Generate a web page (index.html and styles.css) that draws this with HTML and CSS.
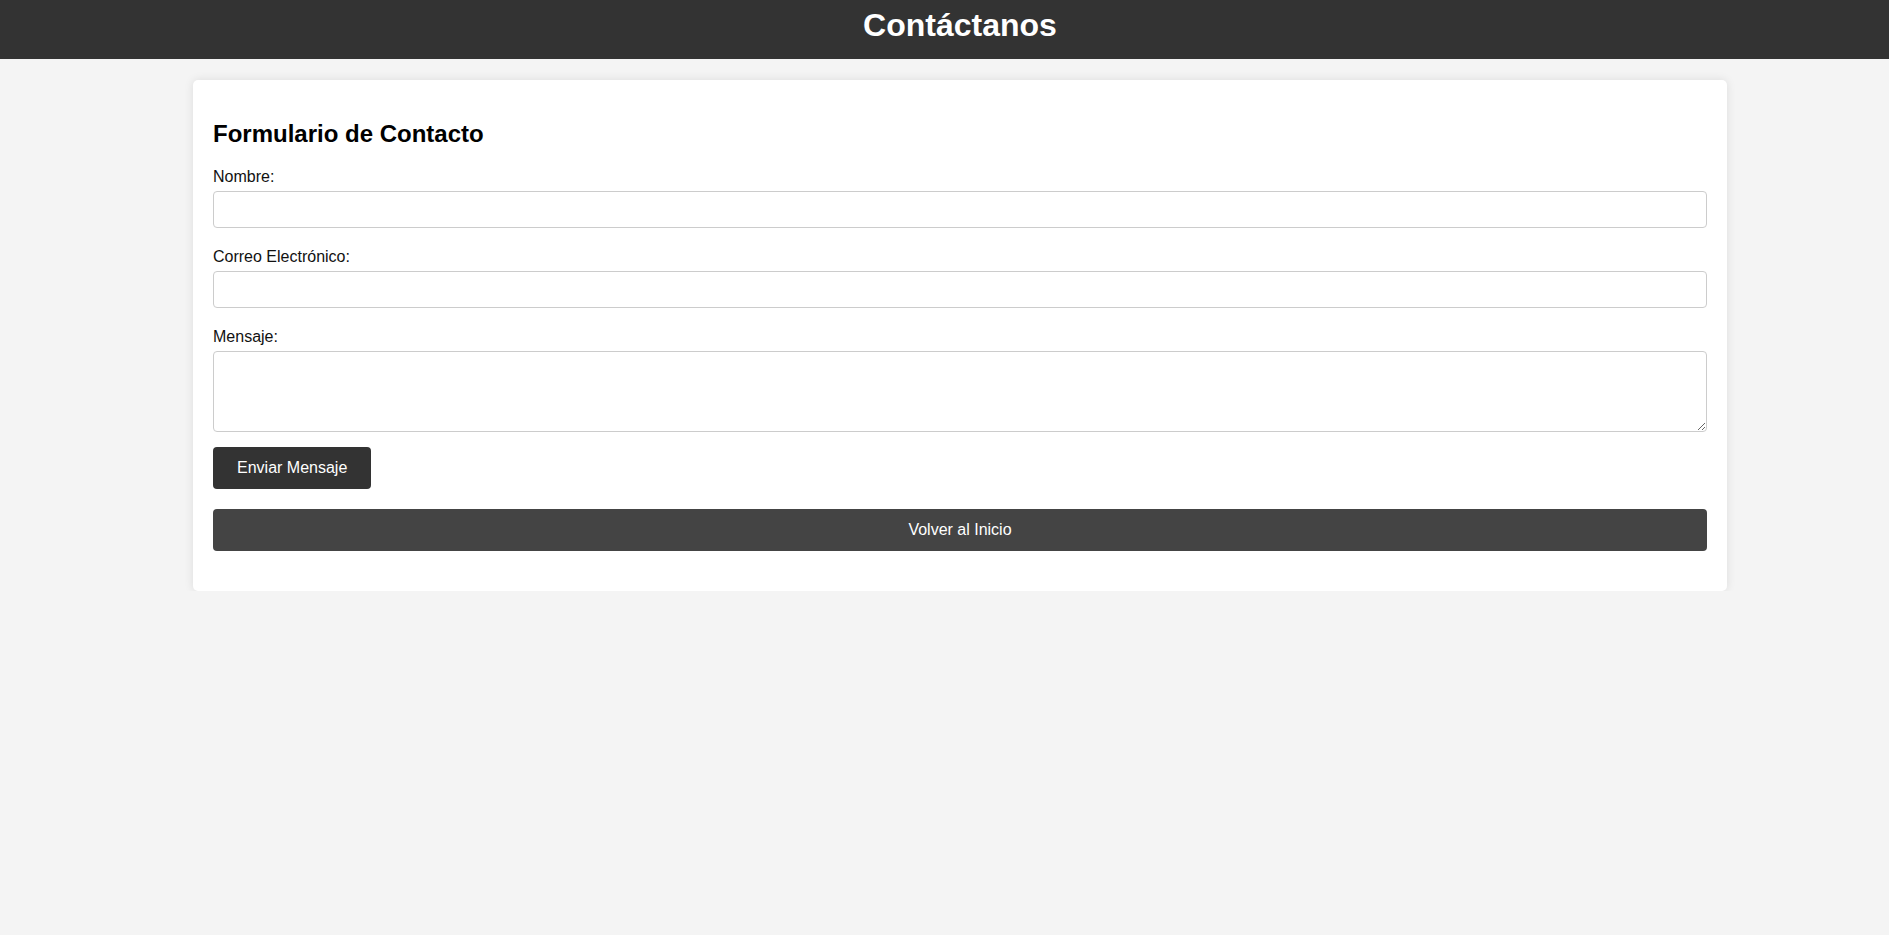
FILE: index.html
```html
<!DOCTYPE html>
<html lang="es">
<head>
<meta charset="utf-8">
<title>Contáctanos</title>
<link rel="stylesheet" href="styles.css">
</head>
<body>
<header class="site-header">
  <h1 class="site-title">Contáctanos</h1>
</header>
<main class="card">
  <h2 class="form-title">Formulario de Contacto</h2>
  <form class="contact-form">
    <label class="field-label" for="nombre">Nombre:</label>
    <input class="field-input" type="text" id="nombre">
    <label class="field-label" for="correo">Correo Electrónico:</label>
    <input class="field-input" type="email" id="correo">
    <label class="field-label" for="mensaje">Mensaje:</label>
    <textarea class="field-textarea" id="mensaje"></textarea>
    <div class="actions">
      <button class="send-btn" type="button">Enviar Mensaje</button>
    </div>
  </form>
  <a class="back-btn" href="#">Volver al Inicio</a>
</main>
</body>
</html>
```

FILE: styles.css
```css
* { box-sizing: border-box; }
html, body { margin: 0; padding: 0; }
body {
  background: #f4f4f4;
  font-family: "Liberation Sans", Arial, sans-serif;
  color: #000;
  font-size: 16px;
}
.site-header {
  background: #333;
  color: #fff;
  height: 59px;
  padding: 7px 0 0 31px;
  text-align: center;
}
.site-title {
  margin: 0;
  font-size: 32px;
  line-height: 37px;
  font-weight: bold;
}
.card {
  display: block;
  width: 1534px;
  margin: 21px 0 0 193px;
  background: #fff;
  border-radius: 5px;
  box-shadow: 0 0 10px rgba(0,0,0,0.1);
  padding: 20px 20px 40px;
}
.form-title {
  font-size: 24px;
  font-weight: bold;
  margin: 20px 0 20px;
  line-height: normal;
}
.contact-form {
  display: flex;
  flex-direction: column;
}
.field-label {
  display: block;
  font-size: 16px;
  line-height: 18px;
  margin-bottom: 5px;
  color: #111;
}
.field-input {
  display: block;
  width: 100%;
  height: 37px;
  border: 1px solid #ccc;
  border-radius: 4px;
  padding: 8px;
  font: 16px "Liberation Sans", Arial, sans-serif;
  margin: 0 0 20px;
}
.field-textarea {
  display: block;
  width: 100%;
  height: 81px;
  border: 1px solid #ccc;
  border-radius: 4px;
  padding: 8px;
  font: 16px "Liberation Sans", Arial, sans-serif;
  margin: 0 0 15px;
}
.actions { display: flex; }
.send-btn {
  background: #333;
  color: #fff;
  border: none;
  border-radius: 4px;
  height: 42px;
  padding: 0 24px;
  font: 16px "Liberation Sans", Arial, sans-serif;
}
.back-btn {
  display: block;
  margin-top: 20px;
  height: 42px;
  line-height: 42px;
  background: #444;
  color: #fff;
  text-decoration: none;
  text-align: center;
  border-radius: 4px;
  font-size: 16px;
}
```
